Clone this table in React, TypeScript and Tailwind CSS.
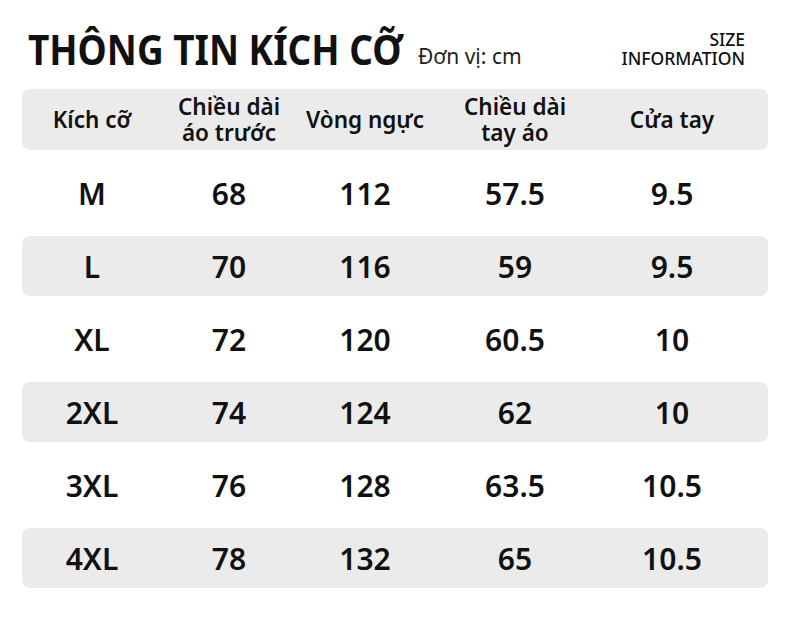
import React from "react";

const cols = ["w-[140px]", "w-[134px]", "w-[138px]", "w-[162px]", "w-[152px]"];

const rows: string[][] = [
  ["M", "68", "112", "57.5", "9.5"],
  ["L", "70", "116", "59", "9.5"],
  ["XL", "72", "120", "60.5", "10"],
  ["2XL", "74", "124", "62", "10"],
  ["3XL", "76", "128", "63.5", "10.5"],
  ["4XL", "78", "132", "65", "10.5"],
];

export default function App() {
  return (
    <div
      className="w-[790px] h-[617px] bg-white text-[#111] overflow-hidden"
      style={{ fontFamily: '"Noto Sans", "Noto Sans CJK SC", sans-serif' }}
    >
      <div className="flex items-end justify-between pl-[28px] pr-[45px] pt-[24px] h-[70px]">
        <div className="flex items-end gap-[18px]">
          <h1 className="w-[372px] whitespace-nowrap text-[42px] font-bold leading-none origin-left scale-x-[0.88]">THÔNG TIN KÍCH CỠ</h1>
          <span className="text-[21px] leading-none mb-[3px] text-[#222]">Đơn vị: cm</span>
        </div>
        <div className="text-right text-[17.5px] font-medium leading-[19px] mb-[2px]">
          <div>SIZE</div>
          <div>INFORMATION</div>
        </div>
      </div>
      <div className="mx-[22px] mt-[19px] flex flex-col gap-[13px]">
        <div className="h-[61px] rounded-[8px] bg-[#ebebeb] flex items-center text-[22.5px] font-semibold leading-[26px]">
          <div className={`${cols[0]} text-center`}>Kích cỡ</div>
          <div className={`${cols[1]} text-center`}>Chiều dài<br />áo trước</div>
          <div className={`${cols[2]} text-center`}>Vòng ngực</div>
          <div className={`${cols[3]} text-center`}>Chiều dài<br />tay áo</div>
          <div className={`${cols[4]} text-center`}>Cửa tay</div>
        </div>
        {rows.map((r, i) => (
          <div
            key={r[0]}
            className={`h-[60px] rounded-[8px] flex items-center text-[30px] font-semibold ${i % 2 === 1 ? "bg-[#ebebeb]" : ""}`}
          >
            {r.map((c, j) => (
              <div key={j} className={`${cols[j]} text-center`}>{c}</div>
            ))}
          </div>
        ))}
      </div>
    </div>
  );
}
